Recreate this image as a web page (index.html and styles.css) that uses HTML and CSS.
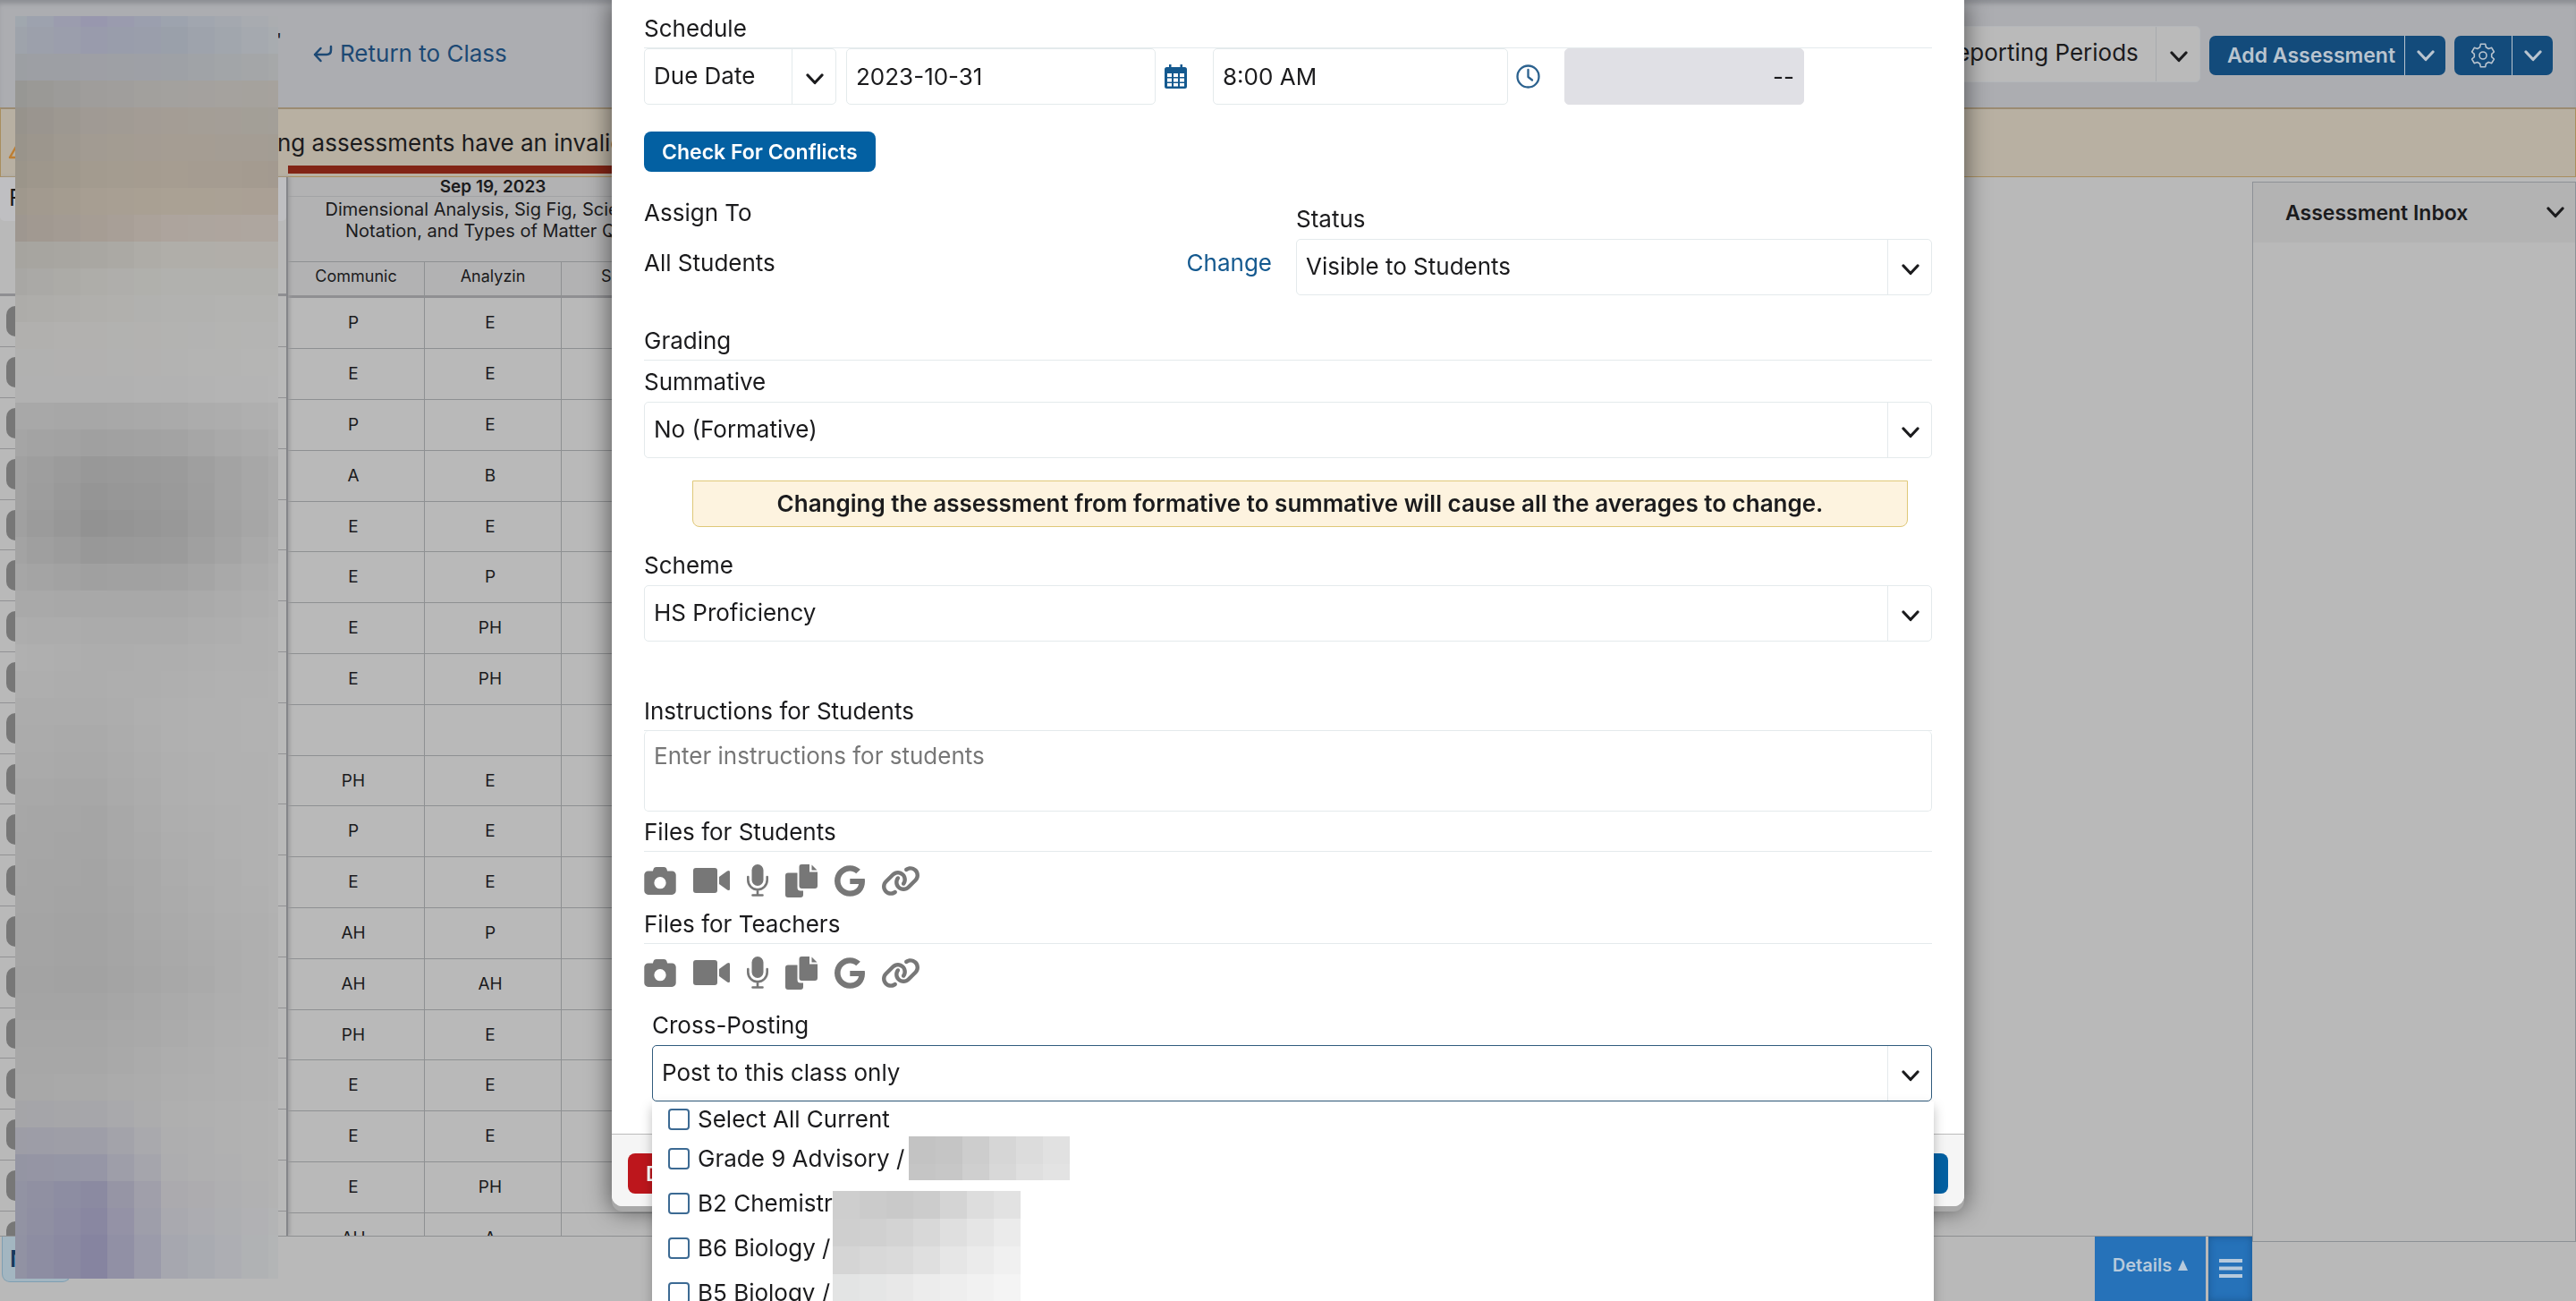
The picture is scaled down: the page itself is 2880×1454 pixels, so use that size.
FILE: index.html
```html
<!DOCTYPE html>
<html lang="en">
<head>
    <meta charset="UTF-8">
    <meta name="viewport" content="width=device-width, initial-scale=1.0">
    <title>Gradebook</title>
    <link rel="stylesheet" href="styles.css">
</head>
<body>
    <!-- Shared icons -->
    <svg class="icon-defs" aria-hidden="true">
        <symbol id="chevron" viewBox="0 0 20 13"><path d="M2 2l8 8.500 8-8.500" fill="none" stroke="currentColor" stroke-width="3.200" stroke-linecap="round" stroke-linejoin="round"/></symbol>
        <symbol id="camera" viewBox="0 32 512 448"><path d="M149 65L139 96H64C29 96 0 125 0 160V416c0 35 29 64 64 64H448c35 0 64-29 64-64V160c0-35-29-64-64-64H373L363 65C356 45 338 32 317 32H195c-21 0-39 13-46 33zM256 192a96 96 0 1 1 0 192 96 96 0 1 1 0-192z"/></symbol>
        <symbol id="video" viewBox="0 0 41 28"><rect width="27" height="28" rx="3"/><path d="M29 10l9-6.500q3-1.500 3 1v19q0 2.500-3 1L29 18z"/></symbol>
        <symbol id="mic" viewBox="0 0 24 36"><rect x="5.500" width="13" height="24" rx="6.500"/><path d="M1.300 14v3.500a10.700 10.700 0 0 0 21.400 0V14M12 28v6M6.500 34.500h11" fill="none" stroke="currentColor" stroke-width="2.600" stroke-linecap="round"/></symbol>
        <symbol id="files" viewBox="0 0 36 37"><path d="M3 9.500h10.500V26q0 3.500 3.500 3.500h3V34q0 3-3 3H3q-3 0-3-3V12.500q0-3 3-3z"/><path d="M18.500 0H27v8.500h9V24q0 3-3 3H18.500q-3 0-3-3V3q0-3 3-3z"/><path d="M29.500 0.500L35.500 6.500h-6z"/></symbol>
        <symbol id="google" viewBox="0 8 488 496"><path d="M488 261.800C488 403.300 391.100 504 248 504 110.800 504 0 393.200 0 256S110.800 8 248 8c66.800 0 123 24.500 166.300 64.900l-67.500 64.900C258.500 52.600 94.300 116.600 94.300 256c0 86.500 69.100 156.600 153.700 156.600 98.200 0 135-70.400 140.800-106.900H248v-85.300h236.100c2.300 12.700 3.900 24.900 3.900 41.400z"/></symbol>
        <symbol id="link" viewBox="18 4 604 504"><path d="M579.800 267.700c56.500-56.500 56.500-148 0-204.500c-50-50-128.800-56.500-186.300-15.400l-1.600 1.100c-14.400 10.300-17.700 30.300-7.400 44.600s30.300 17.700 44.600 7.400l1.600-1.100c32.100-22.900 76-19.300 103.800 8.600c31.500 31.500 31.500 82.500 0 114L422.300 334.800c-31.500 31.500-82.500 31.500-114 0c-27.900-27.900-31.500-71.800-8.600-103.800l1.100-1.600c10.300-14.400 6.900-34.400-7.400-44.600s-34.400-6.900-44.600 7.400l-1.100 1.600C206.500 251.200 213 330 263 380c56.500 56.500 148 56.500 204.500 0L579.800 267.700zM60.200 244.300c-56.500 56.500-56.500 148 0 204.500c50 50 128.800 56.500 186.300 15.400l1.600-1.100c14.400-10.300 17.700-30.300 7.400-44.600s-30.300-17.700-44.600-7.400l-1.600 1.100c-32.100 22.900-76 19.300-103.800-8.600C74 372 74 321 105.500 289.500L217.700 177.200c31.500-31.500 82.500-31.500 114 0c27.900 27.900 31.500 71.800 8.600 103.900l-1.100 1.600c-10.300 14.400-6.900 34.400 7.400 44.600s34.400 6.900 44.600-7.400l1.100-1.600C433.500 260.800 427 182 377 132c-56.500-56.500-148-56.500-204.500 0L60.200 244.300z"/></symbol>
    </svg>

    <div class="page">
        <header class="topbar">
            <span class="class-name">'</span>
            <a class="return-link" href="#">
                <svg width="22" height="20" viewBox="0 0 22 20" fill="none" stroke="currentColor" stroke-width="2.500" stroke-linecap="round" stroke-linejoin="round"><path d="M20 2v4q0 5-5 5H2M8.500 4L2 11l6.500 7"/></svg>
                Return to Class
            </a>
            <div class="toolbar">
                <div class="select period-select">
                    <select aria-label="Reporting period"><option>All Reporting Periods</option></select>
                    <span class="caret"><svg class="chevron"><use href="#chevron"/></svg></span>
                </div>
                <div class="split-btn">
                    <button type="button">Add Assessment</button>
                    <button type="button" aria-label="More"><svg class="chevron"><use href="#chevron"/></svg></button>
                </div>
                <div class="split-btn gear-btn">
                    <button type="button" aria-label="Settings">
                        <svg width="28" height="28" viewBox="0 0 28 28" fill="none" stroke="currentColor" stroke-width="1.600" stroke-linejoin="round"><path d="M11.300 1.300h5.400l0.700 3.500 2.900 1.700 3.400-1.200 2.700 4.700-2.700 2.300v3.400l2.700 2.300-2.700 4.700-3.400-1.200-2.900 1.700-0.700 3.500h-5.400l-0.700-3.500-2.900-1.700-3.400 1.200L1.600 18l2.700-2.300v-3.400L1.600 10l2.700-4.700 3.400 1.200 2.900-1.700z"/><circle cx="14" cy="14" r="4"/></svg>
                    </button>
                    <button type="button" aria-label="More settings"><svg class="chevron"><use href="#chevron"/></svg></button>
                </div>
            </div>
        </header>

        <div class="banner">
            <svg class="warn-icon" width="34" height="30" viewBox="0 0 34 30" fill="none" stroke="currentColor" stroke-width="2.500" stroke-linejoin="round"><path d="M17 2L32 28H2z"/></svg>
            <span class="banner-text">ng assessments have an invalid date</span>
        </div>

        <main class="main">
            <div class="left-side">
                <div class="gradebook">
                    <div class="red-bar"></div>
                    <div class="students">
                        <div class="filter">F</div>
                        <div class="student-list" id="studentList"></div>
                    </div>
                    <table class="grades">
                        <thead>
                            <tr class="date-row"><th colspan="3">Sep 19, 2023</th></tr>
                            <tr class="title-row"><td colspan="3">Dimensional Analysis, Sig Fig, Scientific<br>Notation, and Types of Matter Quiz</td></tr>
                            <tr class="category-row"><td>Communic</td><td>Analyzin</td><td>Scientif</td></tr>
                        </thead>
                        <tbody id="gradeRows"></tbody>
                    </table>
                </div>
                <footer class="bottom-bar">
                    <button type="button" class="notes-btn">N</button>
                    <div class="bottom-actions">
                        <button type="button">Details <svg width="11" height="12" viewBox="0 0 11 12" fill="currentColor"><path d="M5.500 0L11 12H0z"/></svg></button>
                        <button type="button" class="menu-btn" aria-label="Menu"><svg width="26" height="22" viewBox="0 0 26 22" fill="currentColor"><path d="M0 0h26v4H0zM0 8.500h26v4H0zM0 17h26v4H0z"/></svg></button>
                    </div>
                </footer>
            </div>
            <aside class="inbox">
                <h2>Assessment Inbox <svg class="chevron"><use href="#chevron"/></svg></h2>
            </aside>
        </main>
    </div>

    <div class="pixelated sidebar-pixels" id="sidebarPixels"></div>

    <!-- Assessment dialog -->
    <div class="overlay">
        <form class="modal">
            <div class="modal-body">
                <h3 class="section-title">Schedule</h3>
                <div class="schedule-row">
                    <div class="select due-select">
                        <select aria-label="Date type"><option>Due Date</option></select>
                        <span class="caret"><svg class="chevron"><use href="#chevron"/></svg></span>
                    </div>
                    <input type="text" class="field date-field" value="2023-10-31" aria-label="Date">
                    <svg class="date-icon" width="25" height="27" viewBox="0 0 25 27"><path fill="currentColor" d="M5 0h2.500v3h10V0H20v3h2.500Q25 3 25 5.500V24.500Q25 27 22.500 27h-20Q0 27 0 24.500V5.500Q0 3 2.500 3H5z"/><path fill="#fff" d="M3 10h5v4H3zM10 10h5v4h-5zM17 10h5v4h-5zM3 15.500h5v4H3zM10 15.500h5v4h-5zM17 15.500h5v4h-5zM3 21h5v3.500H3zM10 21h5v3.500h-5zM17 21h5v3.500h-5z"/></svg>
                    <input type="text" class="field time-field" value="8:00 AM" aria-label="Time">
                    <svg class="time-icon" width="27" height="27" viewBox="0 0 27 27" fill="none" stroke="currentColor" stroke-width="2.300" stroke-linecap="round" stroke-linejoin="round"><circle cx="13.500" cy="13.500" r="12"/><path d="M13.500 6v8l4.500 3.500"/></svg>
                    <input type="text" class="field points-field" value="--" aria-label="Points" disabled>
                </div>
                <button type="button" class="btn conflicts-btn">Check For Conflicts</button>

                <div class="assign-row">
                    <div class="assign-to">
                        <div class="label">Assign To</div>
                        <div class="assign-line"><span>All Students</span><a href="#">Change</a></div>
                    </div>
                    <div class="status">
                        <label class="label" for="status">Status</label>
                        <div class="select">
                            <select id="status"><option>Visible to Students</option></select>
                            <span class="caret"><svg class="chevron"><use href="#chevron"/></svg></span>
                        </div>
                    </div>
                </div>

                <h3 class="section-title grading-title">Grading</h3>
                <label class="label summative-label" for="summative">Summative</label>
                <div class="select">
                    <select id="summative"><option>No (Formative)</option></select>
                    <span class="caret"><svg class="chevron"><use href="#chevron"/></svg></span>
                </div>
                <div class="notice">Changing the assessment from formative to summative will cause all the averages to change.</div>
                <label class="label" for="scheme">Scheme</label>
                <div class="select">
                    <select id="scheme"><option>HS Proficiency</option></select>
                    <span class="caret"><svg class="chevron"><use href="#chevron"/></svg></span>
                </div>

                <label class="section-title instructions-title" for="instructions">Instructions for Students</label>
                <textarea id="instructions" class="field" placeholder="Enter instructions for students"></textarea>

                <h3 class="section-title files-title">Files for Students</h3>
                <div class="file-icons">
                    <button type="button" aria-label="Photo"><svg width="36" height="31"><use href="#camera"/></svg></button>
                    <button type="button" aria-label="Video"><svg width="41" height="28"><use href="#video"/></svg></button>
                    <button type="button" aria-label="Audio"><svg width="24" height="36"><use href="#mic"/></svg></button>
                    <button type="button" aria-label="Files"><svg width="36" height="37"><use href="#files"/></svg></button>
                    <button type="button" aria-label="Google Drive"><svg width="34" height="35"><use href="#google"/></svg></button>
                    <button type="button" aria-label="Link"><svg width="42" height="35"><use href="#link"/></svg></button>
                </div>
                <h3 class="section-title">Files for Teachers</h3>
                <div class="file-icons">
                    <button type="button" aria-label="Photo"><svg width="36" height="31"><use href="#camera"/></svg></button>
                    <button type="button" aria-label="Video"><svg width="41" height="28"><use href="#video"/></svg></button>
                    <button type="button" aria-label="Audio"><svg width="24" height="36"><use href="#mic"/></svg></button>
                    <button type="button" aria-label="Files"><svg width="36" height="37"><use href="#files"/></svg></button>
                    <button type="button" aria-label="Google Drive"><svg width="34" height="35"><use href="#google"/></svg></button>
                    <button type="button" aria-label="Link"><svg width="42" height="35"><use href="#link"/></svg></button>
                </div>

                <div class="cross-posting">
                    <label class="label" for="crossPosting">Cross-Posting</label>
                    <div class="select open">
                        <select id="crossPosting"><option>Post to this class only</option></select>
                        <span class="caret"><svg class="chevron"><use href="#chevron"/></svg></span>
                    </div>
                    <div class="class-menu">
                        <label><input type="checkbox"> Select All Current</label>
                        <label><input type="checkbox"> Grade 9 Advisory /</label>
                        <label><input type="checkbox"> B2 Chemistr</label>
                        <label><input type="checkbox"> B6 Biology /</label>
                        <label><input type="checkbox"> B5 Biology /</label>
                        <div class="pixelated advisory-pixels" id="advisoryPixels"></div>
                        <div class="pixelated class-pixels" id="classPixels"></div>
                    </div>
                </div>
            </div>
            <div class="modal-footer">
                <button type="button" class="btn delete-btn">Delete</button>
                <button type="submit" class="btn">Save</button>
            </div>
        </form>
    </div>

    <script src="script.js"></script>
</body>
</html>
```

FILE: styles.css
```css
* {
    box-sizing: border-box;
}

body {
    margin: 0;
    font-family: Inter, "Liberation Sans", sans-serif;
    font-size: 26px;
    line-height: 36px;
    color: #1b1b1d;
    background-color: #b9b9b9;
    overflow: hidden;
}

button, input, select, textarea {
    font: inherit;
    color: inherit;
    margin: 0;
}

button {
    border: none;
    padding: 0;
    cursor: pointer;
}

a {
    color: #14598f;
    text-decoration: none;
}

svg {
    display: block;
    flex: none;
}

.icon-defs {
    position: absolute;
    width: 0;
    height: 0;
}

.chevron {
    width: 20px;
    height: 13px;
}

/* Page behind the dialog */
.page {
    height: 100vh;
    display: flex;
    flex-direction: column;
}

.topbar {
    flex: none;
    height: 120px;
    display: flex;
    align-items: center;
    padding-right: 26px;
    background-color: #acadb1;
    box-shadow: inset 0 6px 5px -2px #8d8f94;
}

.class-name {
    width: 350px;
    padding-left: 309px;
    font-size: 20px;
    line-height: 90px;
    align-self: flex-start;
}

.return-link {
    display: flex;
    align-items: center;
    gap: 8px;
    color: #1d4974;
}

.toolbar {
    display: flex;
    align-items: center;
    gap: 10px;
    margin-left: auto;
}

.select {
    position: relative;
}

.select select {
    display: block;
    width: 100%;
    height: 63px;
    padding: 0 60px 2px 10px;
    border: 1px solid #e4eaec;
    border-radius: 5px;
    background-color: #fff;
    appearance: none;
}

.caret {
    position: absolute;
    top: 1px;
    right: 0;
    bottom: 1px;
    width: 50px;
    padding-top: 6px;
    display: flex;
    align-items: center;
    justify-content: center;
    border-left: 1px solid #e4eaec;
    pointer-events: none;
}

.period-select select {
    width: 352px;
    padding-left: 24px;
    border-color: #b4b7ba;
    background-color: #bababa;
}

.period-select .caret {
    border-color: #a8abae;
}

.split-btn {
    display: flex;
    height: 44px;
    margin-top: 4px;
    border-radius: 7px;
    overflow: hidden;
    background-color: #134b7b;
    color: #b9c4cf;
}

.split-btn button {
    display: flex;
    align-items: center;
    justify-content: center;
    width: 46px;
    border-left: 1px solid #b9c4cf;
    background: none;
    font-size: 23px;
    font-weight: 600;
}

.split-btn button:first-child {
    width: 218px;
    padding-left: 10px;
    border-left: none;
}

.gear-btn button:first-child {
    width: 64px;
    padding-left: 0;
}

.banner {
    position: relative;
    flex: none;
    height: 78px;
    padding: 20px 0 0 309px;
    border: 1px solid #a98e5e;
    border-top: 2px solid #9b8b72;
    background-color: #b8b0a2;
    white-space: nowrap;
}

.warn-icon {
    position: absolute;
    left: 8px;
    top: 26px;
    color: #bd7e33;
}

.main {
    flex: 1;
    min-height: 0;
    display: flex;
}

.left-side {
    flex: 1;
    min-width: 0;
    display: flex;
    flex-direction: column;
}

.gradebook {
    position: relative;
    flex: 1;
    min-height: 0;
    display: flex;
}

.red-bar {
    position: absolute;
    top: -13px;
    left: 322px;
    right: 0;
    height: 9px;
    max-width: 1400px;
    background-color: #822415;
}

.students {
    position: relative;
    width: 322px;
    overflow: hidden;
    border-right: 2px solid #85868a;
    box-shadow: 2px 0 4px #9a9a9c;
}

.filter {
    height: 49px;
    margin-bottom: 81px;
    padding: 5px 10px;
    border-radius: 0 0 5px 5px;
    background-color: #bfbfc2;
}

.student-list {
    border-top: 3px solid #8f8f92;
}

.student {
    height: 57px;
    padding: 11px 7px;
    border-bottom: 1px solid #929294;
}

.student:nth-child(5n) {
    height: 56px;
}

.student span {
    display: block;
    width: 35px;
    height: 34px;
    border-radius: 10px;
    background-color: #777;
}

.grades {
    width: 459px;
    height: 0;
    table-layout: fixed;
    border-collapse: separate;
    border-spacing: 0;
    font-size: 19px;
    line-height: 24px;
    text-align: center;
}

.grades td, .grades th {
    padding: 0;
    border-bottom: 1px solid #8e9092;
    border-right: 1px solid #8e9092;
}

.grades thead {
    background-color: #b2b2b3;
}

.date-row th {
    height: 22px;
    font-size: 19px;
    line-height: 18px;
    font-weight: 600;
    border-color: #a2a3a5;
}

.grades .title-row td {
    height: 73px;
    padding-top: 2px;
    font-size: 20px;
    white-space: nowrap;
    vertical-align: top;
}

.grades .category-row td {
    height: 40px;
    padding-bottom: 5px;
    font-size: 18px;
    border-bottom: 3px solid #8f8f92;
}

.grades tbody td {
    height: 57px;
    padding-right: 6px;
}

.grades tbody tr:nth-child(5n) td {
    height: 56px;
}

.bottom-bar {
    position: relative;
    flex: none;
    height: 73px;
    display: flex;
    justify-content: space-between;
    border-top: 1px solid #8e9092;
    background-color: #b9b9b9;
}

.notes-btn {
    width: 77px;
    height: 51px;
    margin-left: 2px;
    padding-left: 8px;
    border: 1px solid #7f9fb2;
    border-top: none;
    border-radius: 0 0 9px 9px;
    background-color: #a3b6c1;
    color: #163a5e;
    font-weight: 600;
    text-align: left;
}

.bottom-actions {
    display: flex;
    gap: 3px;
}

.bottom-actions button {
    display: flex;
    justify-content: center;
    gap: 7px;
    align-items: center;
    width: 124px;
    padding-bottom: 8px;
    background-color: #2672b9;
    color: #b7cadc;
    font-size: 20px;
    font-weight: 600;
}

.bottom-actions .menu-btn {
    width: 49px;
    padding-bottom: 0;
    box-shadow: inset 0 0 8px #1b5790;
}

.inbox {
    width: 362px;
    margin: 5px 0 66px;
    border: 1px solid #8d9196;
}

.inbox h2 {
    display: flex;
    align-items: center;
    justify-content: space-between;
    height: 67px;
    margin: 0;
    padding: 0 12px 0 36px;
    background-color: #b3b3b3;
    font-size: 23px;
    font-weight: 600;
}

/* Blocks that hide the names */
.pixelated {
    position: absolute;
    display: grid;
}

.sidebar-pixels {
    left: 17px;
    top: 18px;
    width: 294px;
    grid-template-columns: 13px repeat(9, 30px) 11px;
    grid-template-rows: 12px repeat(46, 30px) 19px;
}

.advisory-pixels {
    left: 287px;
    top: 39px;
    grid-template-columns: repeat(6, 30px);
    grid-template-rows: 31px 18px;
}

.class-pixels {
    left: 202px;
    top: 100px;
    grid-template-columns: repeat(7, 30px);
    grid-auto-rows: 31px;
}

/* Assessment dialog */
.overlay {
    position: fixed;
    inset: 0;
    display: flex;
    align-items: flex-start;
    justify-content: center;
    overflow: hidden;
}

.modal {
    width: 1512px;
    max-width: 100%;
    border-radius: 0 0 12px 12px;
    background-color: #fff;
    box-shadow: 0 6px 0 #a9a9a9, 0 4px 26px 2px rgba(0, 0, 0, 0.5);
}

.modal-body {
    padding: 14px 36px 36px;
}

.section-title {
    display: block;
    margin: 0;
    padding-bottom: 3px;
    border-bottom: 1px solid #e4eaec;
    font-size: 26px;
    font-weight: 400;
}

.label {
    display: block;
    margin-bottom: 4px;
}

.field {
    height: 63px;
    padding: 0 10px;
    border: 1px solid #e4eaec;
    border-radius: 5px;
    background-color: #fff;
}

.schedule-row {
    display: flex;
    align-items: center;
}

.due-select {
    width: 215px;
    margin-right: 11px;
}

.date-field {
    width: 346px;
}

.date-icon {
    margin: 0 29px 0 10px;
    color: #14598f;
}

.time-field {
    width: 330px;
}

.time-icon {
    margin: 0 27px 0 9px;
    color: #2c628f;
}

.points-field {
    width: 268px;
    border-color: #e0e0e5;
    background-color: #e0e0e5;
    text-align: right;
}

.btn {
    height: 45px;
    padding: 0 20px;
    border-radius: 8px;
    background-color: #0360a2;
    color: #fff;
    font-size: 23px;
    font-weight: 600;
}

.conflicts-btn {
    display: block;
    margin-top: 30px;
}

.assign-row {
    display: flex;
    gap: 27px;
    margin-top: 28px;
}

.assign-to {
    flex: 1;
}

.assign-to .label {
    margin-bottom: 20px;
}

.assign-line {
    display: flex;
    justify-content: space-between;
}

.status {
    width: 711px;
    padding-top: 7px;
}

.grading-title {
    margin-top: 33px;
}

.summative-label {
    margin-top: 6px;
}

.notice {
    margin: 25px 27px 25px 54px;
    padding: 7px 0;
    border: 1px solid #dfc878;
    border-radius: 0 0 8px 8px;
    background-color: #fdf3df;
    font-weight: 600;
    text-align: center;
}

.instructions-title {
    margin-top: 60px;
}

textarea.field {
    display: block;
    width: 100%;
    height: 90px;
    padding-top: 10px;
    border-top: none;
    resize: none;
}

textarea::placeholder {
    color: #777;
}

.files-title {
    margin-top: 5px;
}

.file-icons {
    display: flex;
    align-items: center;
    gap: 19px;
    height: 60px;
    padding-top: 4px;
    margin-bottom: 3px;
}

.file-icons button {
    background: none;
    color: #777;
}

.file-icons svg {
    fill: currentColor;
}

.cross-posting {
    position: relative;
    margin: 13px 0 0 9px;
}

.open select {
    border-color: #315c7d;
}

.class-menu {
    position: absolute;
    top: 103px;
    left: 0;
    right: -2px;
    height: 300px;
    background-color: #fff;
    box-shadow: 0 6px 12px rgba(0, 0, 0, 0.25);
}

.class-menu label {
    display: flex;
    align-items: center;
    gap: 9px;
    height: 50px;
    padding-left: 18px;
}

.class-menu label:first-child {
    height: 39px;
}

.class-menu input {
    width: 24px;
    height: 24px;
    border: 2px solid #3c6a93;
    border-radius: 4px;
    background-color: #fff;
    appearance: none;
}

.modal-footer {
    display: flex;
    justify-content: space-between;
    padding: 21px 18px 14px;
    border-top: 1px solid #bcbcbc;
    border-radius: 0 0 12px 12px;
    background-color: #f5f5f5;
}

.delete-btn {
    background-color: #bd161c;
}
```

FILE: script.js
```js
const grades = [
    ['P', 'E'], ['E', 'E'], ['P', 'E'], ['A', 'B'], ['E', 'E'], ['E', 'P'], ['E', 'PH'],
    ['E', 'PH'], ['', ''], ['PH', 'E'], ['P', 'E'], ['E', 'E'], ['AH', 'P'], ['AH', 'AH'],
    ['PH', 'E'], ['E', 'E'], ['E', 'E'], ['E', 'PH'], ['AH', 'A']
];

document.getElementById('gradeRows').innerHTML = grades
    .map(g => `<tr><td>${g[0]}</td><td>${g[1]}</td><td></td></tr>`).join('');
document.getElementById('studentList').innerHTML = grades
    .map(() => '<div class="student"><span></span></div>').join('');

// row number, then the colour at columns 0, 3, 6 and 10
const sidebarColors = [
    [0, 'a0a7ae', '9897ae', '9da3ae', 'abadb0'],
    [1, '9ea3ab', '999bac', '9aa0aa', 'a8acb0'],
    [2, '9c9fa3', '9e9fa5', '9ea1a6', 'a6a8a9'],
    [3, '979794', '9f9d9b', 'a3a19e', 'a6a29d'],
    [4, '97938c', 'a09a94', 'a49d95', 'a39f98'],
    [6, '9b958a', 'a39b8f', 'a69d91', 'a39a90'],
    [7, '9f988d', 'a79e92', 'aaa194', 'aaa095'],
    [8, '9e9790', 'a69d94', 'ada49d', 'aea69f'],
    [9, 'a6a49f', 'a9a7a2', 'b0aea9', 'b1aea9'],
    [10, 'a8a7a4', 'aeada9', 'b1b1ae', 'b1b1ae'],
    [12, 'b1b0ae', 'b2b1af', 'b3b3b1', 'b4b4b3'],
    [14, 'b1b1b1', 'b1b1b1', 'b2b2b2', 'b5b5b5'],
    [15, 'a8a8a8', 'a7a7a7', 'aaaaaa', 'b0b0b0'],
    [17, 'a1a1a1', '989898', '9b9b9b', 'ababab'],
    [19, 'a0a0a0', '929292', '989898', 'ababab'],
    [20, 'a3a3a3', '989898', '9b9b9b', 'adadad'],
    [22, 'a9a9a9', 'a8a8a8', 'a8a8a8', 'b0b0b0'],
    [24, 'b0b0b0', 'adadad', 'aeaeae', 'b1b1b1'],
    [26, 'acacac', 'acacac', 'b0b0b0', 'b2b2b2'],
    [30, 'a7a7a7', 'a5a5a5', 'aeaeae', 'b2b2b2'],
    [36, 'a3a3a3', 'a2a2a2', 'a8a8a8', 'b1b1b1'],
    [40, 'a8a8a8', 'a9a9a9', 'aeaeae', 'b2b2b2'],
    [41, 'a5a5a8', 'a6a6aa', 'afafaf', 'b3b3b3'],
    [43, '9495a3', '9696a6', 'adadaf', 'b3b3b3'],
    [44, '9293a3', '8b8aa1', 'abaaae', 'b3b3b3'],
    [46, '9192a3', '8684a0', 'a6a7af', 'b3b5b6'],
    [47, '9192a3', '8684a0', 'a6a7af', 'b3b5b6']
];

function mix(a, b, t) {
    return a.map((v, i) => Math.round(v + (b[i] - v) * t));
}

function rgb(hex) {
    return [0, 2, 4].map(i => parseInt(hex.substr(i, 2), 16));
}

function colorAt(stops, positions, x) {
    let i = 0;
    while (i < positions.length - 2 && x > positions[i + 1]) i++;
    return mix(stops[i], stops[i + 1], (x - positions[i]) / (positions[i + 1] - positions[i]));
}

function fill(id, colors) {
    document.getElementById(id).innerHTML = colors
        .map(c => `<i style="background:${c}"></i>`).join('');
}

const sidebar = [];
for (let row = 0; row < 48; row++) {
    const rowStops = sidebarColors.map(r => r[0]);
    const cols = [1, 2, 3, 4].map(n => colorAt(sidebarColors.map(r => rgb(r[n])), rowStops, row));
    for (let col = 0; col < 11; col++) {
        sidebar.push(`rgb(${colorAt(cols, [0, 3, 6, 10], col)})`);
    }
}
fill('sidebarPixels', sidebar);

fill('advisoryPixels', [
    '#c3c3c3', '#c5c5c5', '#cdcdcd', '#d6d6d6', '#dcdcdc', '#e1e1e1',
    '#c5c5c5', '#c7c7c7', '#cfcfcf', '#d8d8d8', '#dfdfdf', '#e3e3e3'
]);

fill('classPixels', [
    '#cecece', '#cbcbcb', '#c9c9c9', '#cccccc', '#d4d4d4', '#dddddd', '#e2e2e2',
    '#cfcfcf', '#d0d0d0', '#d3d3d3', '#d8d8d8', '#dfdfdf', '#e5e5e5', '#ebebeb',
    '#d5d5d5', '#d8d8d8', '#dadada', '#dfdfdf', '#e6e6e6', '#ebebeb', '#f0f0f0',
    '#e3e4e4', '#e5e6e6', '#e8e8e8', '#ececec', '#eeeeee', '#f1f1f1', '#f4f4f4'
]);
```
